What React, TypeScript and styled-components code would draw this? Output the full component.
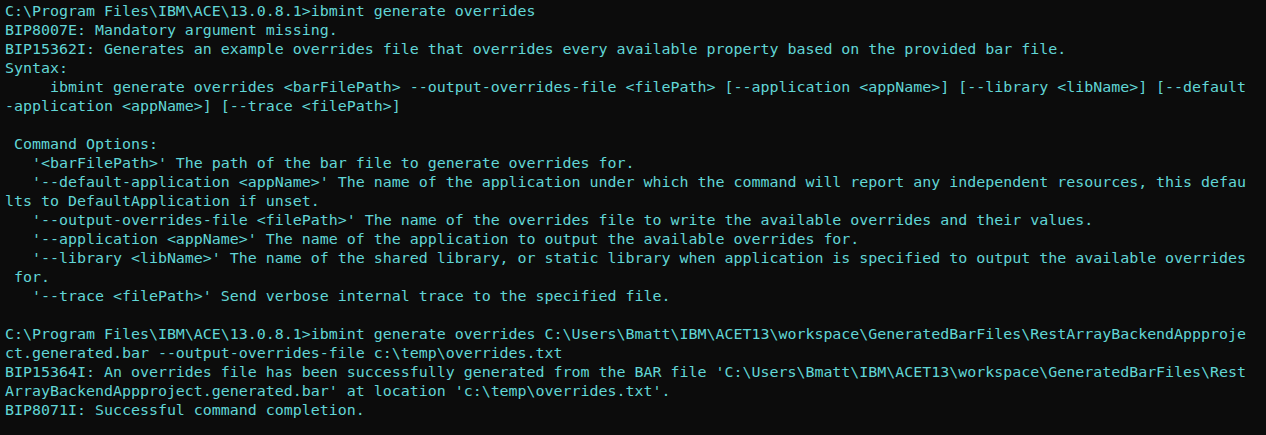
import React from "react";
import styled, { createGlobalStyle } from "styled-components";

const Global = createGlobalStyle`
  html, body {
    margin: 0;
    padding: 0;
    background: #0c0c0c;
  }
  #root {
    background: #0c0c0c;
  }
`;

const Terminal = styled.div`
  width: 1266px;
  height: 435px;
  box-sizing: border-box;
  background: #0c0c0c;
  padding: 2px 0 0 5px;
  overflow: hidden;
  display: flex;
  flex-direction: column;
`;

const Line = styled.div`
  font-family: "DejaVu Sans Mono", "Liberation Mono", monospace;
  font-size: 14.95px;
  line-height: 19px;
  height: 19px;
  color: #61d6d6;
  white-space: pre;
`;

const lines: string[] = [
  "C:\\Program Files\\IBM\\ACE\\13.0.8.1>ibmint generate overrides",
  "BIP8007E: Mandatory argument missing.",
  "BIP15362I: Generates an example overrides file that overrides every available property based on the provided bar file.",
  "Syntax:",
  "     ibmint generate overrides <barFilePath> --output-overrides-file <filePath> [--application <appName>] [--library <libName>] [--default",
  "-application <appName>] [--trace <filePath>]",
  "",
  " Command Options:",
  "   '<barFilePath>' The path of the bar file to generate overrides for.",
  "   '--default-application <appName>' The name of the application under which the command will report any independent resources, this defau",
  "lts to DefaultApplication if unset.",
  "   '--output-overrides-file <filePath>' The name of the overrides file to write the available overrides and their values.",
  "   '--application <appName>' The name of the application to output the available overrides for.",
  "   '--library <libName>' The name of the shared library, or static library when application is specified to output the available overrides",
  " for.",
  "   '--trace <filePath>' Send verbose internal trace to the specified file.",
  "",
  "C:\\Program Files\\IBM\\ACE\\13.0.8.1>ibmint generate overrides C:\\Users\\Bmatt\\IBM\\ACET13\\workspace\\GeneratedBarFiles\\RestArrayBackendAppproje",
  "ct.generated.bar --output-overrides-file c:\\temp\\overrides.txt",
  "BIP15364I: An overrides file has been successfully generated from the BAR file 'C:\\Users\\Bmatt\\IBM\\ACET13\\workspace\\GeneratedBarFiles\\Rest",
  "ArrayBackendAppproject.generated.bar' at location 'c:\\temp\\overrides.txt'.",
  "BIP8071I: Successful command completion.",
];

export default function App() {
  return (
    <>
      <Global />
      <Terminal>
        {lines.map((l, i) => (
          <Line key={i}>{l}</Line>
        ))}
      </Terminal>
    </>
  );
}
